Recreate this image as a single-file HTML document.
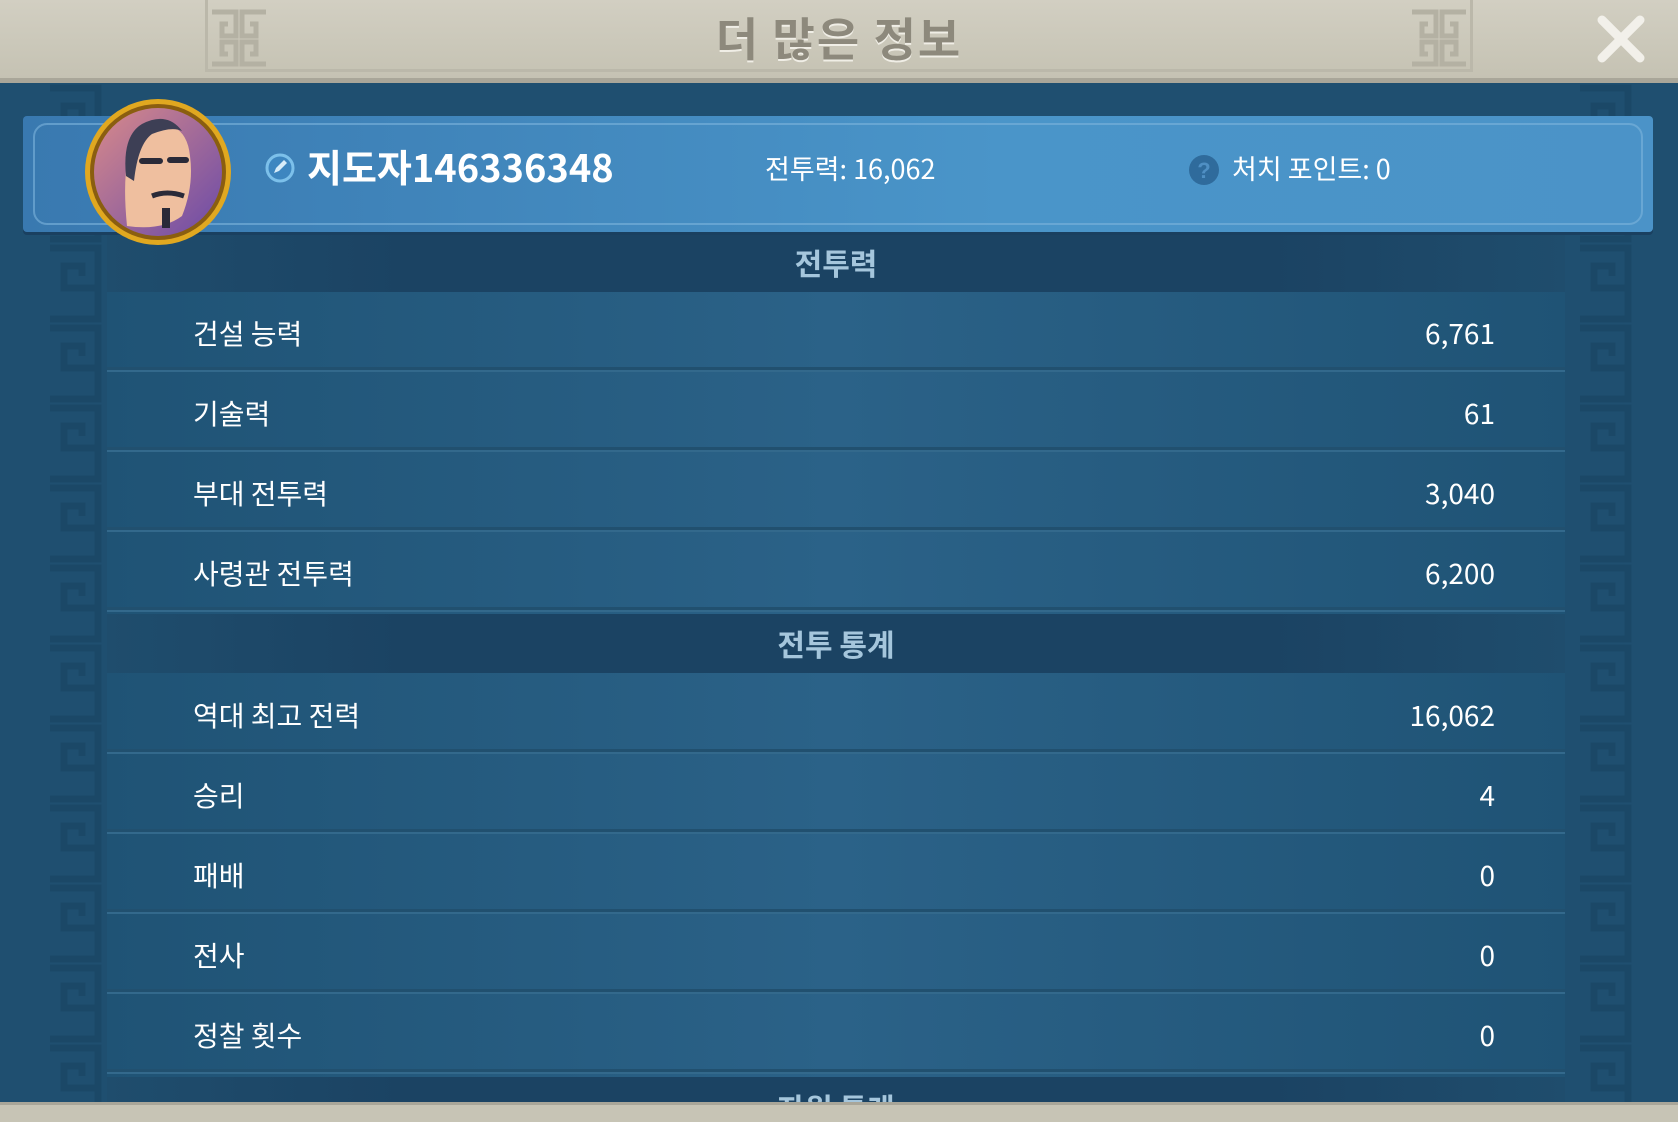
<!DOCTYPE html>
<html><head><meta charset="utf-8"><style>
*{margin:0;padding:0;box-sizing:border-box}
body{width:1678px;height:1122px;overflow:hidden;background:#1f4f70;font-family:"Noto Sans CJK KR","Liberation Sans",sans-serif;position:relative}
.top{position:absolute;left:0;top:0;width:1678px;height:83px;background:linear-gradient(#d2cfc2,#c5c2b3);border-bottom:5px solid #a9a699}
.tinner{position:absolute;left:205px;top:0;width:1268px;height:72px;border:3px solid #bbb8aa;border-top:none}
.title{position:absolute;left:0;width:1678px;top:2px;text-align:center;font-size:46px;font-weight:bold;color:#8d897c;text-shadow:0 2px 0 #f0eee6;letter-spacing:2px;line-height:70px}
.x{position:absolute;left:1596px;top:14px}
.side{position:absolute;top:83px;height:1020px;width:68px;opacity:.4}
.content{position:absolute;left:107px;top:232px;width:1458px;height:870px;background:linear-gradient(90deg,#1f5375,#2b6288 50%,#1f5375)}
.hdr{position:absolute;left:107px;width:1458px;height:59px;background:linear-gradient(90deg,#1f4d6d,#1b4363 20%,#1b4363 80%,#1f4d6d);text-align:center;color:#a5c6dc;font-weight:bold;font-size:30px;line-height:59px}
.row{position:absolute;left:107px;width:1458px;height:80px;border-bottom:2px solid #33698c;box-shadow:inset 0 -3px 0 #21506f}
.row .l{position:absolute;left:86px;top:21px;font-size:28px;color:#fff}
.row .r{position:absolute;right:70px;top:21px;font-size:28px;color:#fff}
.banner{position:absolute;left:23px;top:116px;width:1630px;height:116px;background:linear-gradient(90deg,#3979b0,#4a95c9 60%,#4b93c8);border-radius:4px;box-shadow:0 3px 0 #1a4060}
.binner{position:absolute;left:10px;top:7px;right:10px;bottom:7px;border:2px solid #7db4dc;border-radius:14px;opacity:.6}
.bot{position:absolute;left:0;top:1102px;width:1678px;height:20px;background:#c7c4b5;border-top:3px solid #a9a699}
</style></head><body>
<div class="top"><div class="tinner"></div>
<svg style="position:absolute;left:208px;top:8px" width="62" height="60" viewBox="0 0 62 60" fill="none" stroke="#b4b1a3" stroke-width="5"><path d="M4 4h24v24h-14v-12h6M58 4h-24v24h14v-12h-6M4 56h24v-22h-14v12h6M58 56h-24v-22h14v12h-6"/></svg>
<svg style="position:absolute;left:1408px;top:8px" width="62" height="60" viewBox="0 0 62 60" fill="none" stroke="#b4b1a3" stroke-width="5"><path d="M4 4h24v24h-14v-12h6M58 4h-24v24h14v-12h-6M4 56h24v-22h-14v12h6M58 56h-24v-22h14v12h-6"/></svg>
<div class="title">더 많은 정보</div>
<svg class="x" width="50" height="50" viewBox="0 0 50 50"><path d="M6 6L44 44M44 6L6 44" stroke="#f2f0ea" stroke-width="9" stroke-linecap="round"/></svg>
</div>
<svg class="side" style="left:40px" viewBox="0 0 68 1020" preserveAspectRatio="none"><defs><pattern id="m" width="68" height="80" patternUnits="userSpaceOnUse"><path d="M10 5h48v40h-34v-22h18v10" fill="none" stroke="#173f5c" stroke-width="7"/><path d="M58 48v28h-48" fill="none" stroke="#173f5c" stroke-width="7"/></pattern></defs><rect width="68" height="1020" fill="url(#m)"/></svg>
<svg class="side" style="left:1570px" viewBox="0 0 68 1020" preserveAspectRatio="none"><rect width="68" height="1020" fill="url(#m)"/></svg>
<div class="content"></div>
<div class="hdr" style="top:233px">전투력</div>
<div class="row" style="top:292px"><span class="l">건설 능력</span><span class="r">6,761</span></div>
<div class="row" style="top:372px"><span class="l">기술력</span><span class="r">61</span></div>
<div class="row" style="top:452px"><span class="l">부대 전투력</span><span class="r">3,040</span></div>
<div class="row" style="top:532px"><span class="l">사령관 전투력</span><span class="r">6,200</span></div>
<div class="hdr" style="top:614px">전투 통계</div>
<div class="row" style="top:674px"><span class="l">역대 최고 전력</span><span class="r">16,062</span></div>
<div class="row" style="top:754px"><span class="l">승리</span><span class="r">4</span></div>
<div class="row" style="top:834px"><span class="l">패배</span><span class="r">0</span></div>
<div class="row" style="top:914px"><span class="l">전사</span><span class="r">0</span></div>
<div class="row" style="top:994px"><span class="l">정찰 횟수</span><span class="r">0</span></div>
<div class="hdr" style="top:1077px;overflow:hidden;height:25px;line-height:60px">자원 통계</div>
<div class="banner"><div class="binner"></div>
<svg style="position:absolute;left:241px;top:36px" width="32" height="32" viewBox="0 0 32 32"><circle cx="16" cy="16" r="13" fill="#3d86c0" stroke="#7cc0ea" stroke-width="3"/><path d="M10 21l2-5 8-8 3 3-8 8z" fill="#d7ecf9"/></svg>
<div style="position:absolute;left:284px;top:22px;font-size:38px;font-weight:bold;color:#fff">지도자146336348</div>
<div style="position:absolute;left:742px;top:32px;font-size:27px;color:#fff">전투력: 16,062</div>
<svg style="position:absolute;left:1165px;top:38px" width="32" height="32" viewBox="0 0 32 32"><circle cx="16" cy="16" r="15" fill="#2f6b9c"/><text x="16" y="24" font-size="22" font-weight="bold" text-anchor="middle" fill="#4f8fc3" font-family="Liberation Sans">?</text></svg>
<div style="position:absolute;left:1209px;top:32px;font-size:27px;color:#fff">처치 포인트: 0</div>
</div>
<svg style="position:absolute;left:82px;top:96px" width="152" height="152" viewBox="0 0 152 152">
<defs><linearGradient id="bg" x1="0" y1="0" x2="1" y2="1"><stop offset="0" stop-color="#d98a8a"/><stop offset="1" stop-color="#6a4aa8"/></linearGradient></defs>
<circle cx="76" cy="76" r="73" fill="#e0a820"/><circle cx="76" cy="76" r="68" fill="#8a5e10"/><circle cx="76" cy="76" r="64" fill="url(#bg)"/>
<path d="M45 130 Q40 80 48 55 Q55 28 80 28 Q105 30 108 60 Q112 90 100 120 Q80 135 45 130z" fill="#efbf9f"/>
<path d="M44 80 Q40 40 60 28 Q85 15 100 35 Q90 30 70 38 Q56 48 52 85z" fill="#3d3f55"/>
<path d="M60 65h18M88 64h16" stroke="#2a2a38" stroke-width="6" stroke-linecap="round"/>
<path d="M70 100 Q85 94 102 100" stroke="#2a2a38" stroke-width="5" fill="none"/>
<rect x="80" y="112" width="8" height="20" fill="#2a2a38"/>
</svg>
<div class="bot"></div>
</body></html>
